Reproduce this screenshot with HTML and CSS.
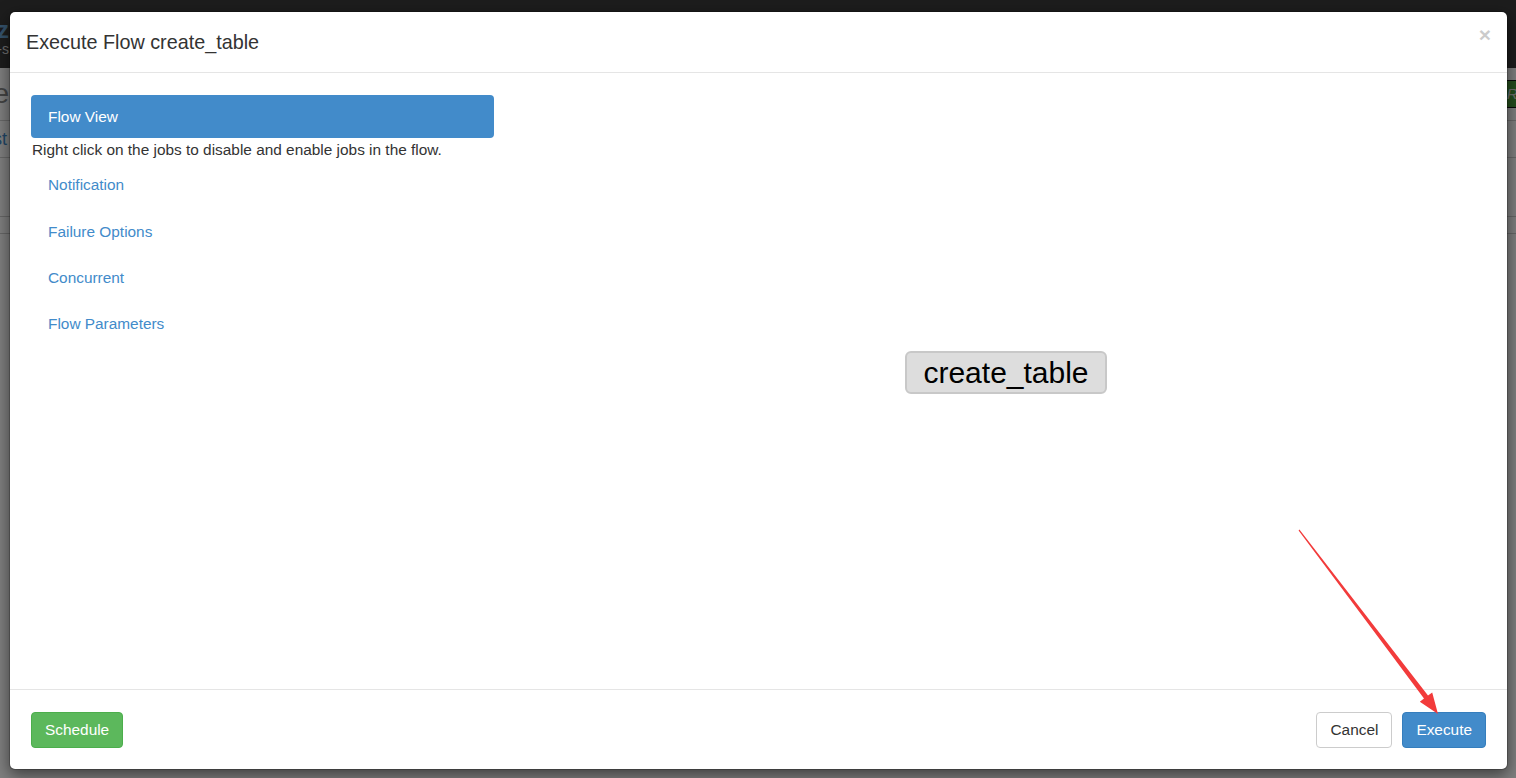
FILE: index.html
```html
<!DOCTYPE html>
<html>
<head>
<meta charset="utf-8">
<link rel="stylesheet" href="styles.css">
</head>
<body>
<div class="page">
  <div class="navbar">
    <div class="clip-left brand"><span class="brand-main">Az</span><span class="brand-sub">Open-s</span></div>
  </div>
  <div class="page-header">
    <h1 class="clip-left page-title">Structure</h1>
    <span class="page-btn">Run</span>
  </div>
  <div class="page-tabs"><span class="clip-left page-tab">List</span></div>
  <div class="page-row"></div>
  <div class="page-row short"></div>
</div>
<div class="backdrop"></div>

<div class="modal">
  <div class="modal-header">
    <h4 class="modal-title">Execute Flow create_table</h4>
    <button class="close" type="button">&times;</button>
  </div>
  <div class="modal-body">
    <div class="sidebar">
      <ul class="nav">
        <li class="active"><a>Flow View</a></li>
        <li class="hint">Right click on the jobs to disable and enable jobs in the flow.</li>
        <li><a>Notification</a></li>
        <li><a>Failure Options</a></li>
        <li><a>Concurrent</a></li>
        <li><a>Flow Parameters</a></li>
      </ul>
    </div>
    <div class="graph">
      <div class="node">create_table</div>
    </div>
  </div>
  <div class="modal-footer">
    <button class="btn btn-success" type="button">Schedule</button>
    <div class="footer-right">
      <button class="btn btn-default" type="button">Cancel</button>
      <button class="btn btn-primary" type="button">Execute</button>
    </div>
  </div>
</div>

<svg class="annotation" width="1516" height="778" viewBox="0 0 1516 778">
  <polygon fill="#f23b3b" points="1299.4,529.6 1298.6,530.4 1424,698.6 1419.8,701.8 1438,714 1432.2,692.6 1428,695.6"/>
</svg>
</body>
</html>
```

FILE: styles.css
```css
html, body {
  margin: 0;
  padding: 0;
  width: 1516px;
  height: 778px;
  overflow: hidden;
  font-family: "Liberation Sans", Arial, Helvetica, sans-serif;
  font-size: 15.4px;
  color: #333;
}

.page {
  width: 1516px;
  height: 778px;
  background: #ffffff;
  display: flex;
  flex-direction: column;
}

.clip-left {
  width: 9px;
  direction: rtl;
  white-space: nowrap;
}

.navbar {
  height: 68px;
  background: #3a3a3a;
  display: flex;
  align-items: center;
}

.brand {
  display: flex;
  flex-direction: column;
  align-items: flex-start;
  line-height: 1;
  margin-top: 6px;
}

.brand-main {
  font-size: 24px;
  font-weight: bold;
  color: #6aa6d8;
}

.brand-sub {
  font-size: 14px;
  color: #dddddd;
}

.page-header {
  height: 52px;
  display: flex;
  align-items: center;
  justify-content: space-between;
  border-bottom: 1px solid #d0d0d0;
}

.page-title {
  margin: 0;
  font-size: 28px;
  font-weight: normal;
  color: #888;
}

.page-btn {
  background: #4a9a3a;
  border: 1px solid #111;
  color: #ddd;
  font-style: italic;
  padding: 4px 20px;
  margin-right: -40px;
}

.page-tabs {
  height: 36px;
  border-bottom: 1px solid #d0d0d0;
  display: flex;
  align-items: center;
}

.page-tab {
  color: #428bca;
  font-size: 18px;
  width: 7px;
}

.page-row {
  height: 58px;
  border-bottom: 1px solid #cfcfcf;
}

.page-row.short {
  height: 16px;
}

.backdrop {
  position: absolute;
  left: 0;
  top: 0;
  width: 1516px;
  height: 778px;
  background: rgba(0, 0, 0, 0.5);
}

.modal {
  position: absolute;
  left: 9px;
  top: 11px;
  width: 1499px;
  height: 759px;
  box-sizing: border-box;
  background: #fff;
  border: 1px solid rgba(0, 0, 0, 0.2);
  border-radius: 6px;
  box-shadow: 0 5px 15px rgba(0, 0, 0, 0.5);
  display: flex;
  flex-direction: column;
  background-clip: padding-box;
}

.modal-header {
  height: 61px;
  box-sizing: border-box;
  padding: 15px 15px 15px 16px;
  border-bottom: 1px solid #e5e5e5;
  display: flex;
  align-items: center;
  justify-content: space-between;
}

.modal-title {
  margin: 0;
  font-size: 19.8px;
  font-weight: normal;
  line-height: 30px;
  color: #333;
}

.close {
  background: none;
  border: 0;
  padding: 0;
  margin: -16px 1px 0 0;
  font-family: "Liberation Sans", Arial, sans-serif;
  font-size: 21px;
  font-weight: bold;
  line-height: 1;
  color: #000;
  opacity: 0.2;
}

.modal-body {
  flex: 1;
  padding: 22px 21px 20px 21px;
  display: flex;
}

.sidebar {
  width: 463px;
  flex: none;
}

.nav {
  list-style: none;
  margin: 0;
  padding: 0;
}

.nav li {
  margin-top: 3.33px;
}

.nav li:first-child {
  margin-top: 0;
}

.nav a {
  display: block;
  padding: 0 17px;
  height: 43px;
  line-height: 44px;
  border-radius: 4px;
  color: #428bca;
  cursor: pointer;
}

.nav li.active a {
  background: #428bca;
  color: #fff;
}

.nav li.hint {
  margin-top: 1px;
  padding-left: 1px;
  line-height: 22px;
  height: 21px;
  color: #333;
}

.graph {
  flex: 1;
  position: relative;
}

.node {
  position: absolute;
  left: 411px;
  top: 256px;
  width: 202px;
  height: 43px;
  box-sizing: border-box;
  background: #dddddd;
  border: 2px solid #c8c8c8;
  border-radius: 6px;
  font-size: 30px;
  line-height: 39px;
  text-align: center;
  color: #000;
}

.modal-footer {
  height: 80px;
  box-sizing: border-box;
  padding: 0 21px 0 21px;
  border-top: 1px solid #e5e5e5;
  display: flex;
  align-items: center;
  justify-content: space-between;
}

.footer-right {
  display: flex;
  gap: 10px;
}

.btn {
  height: 36px;
  box-sizing: border-box;
  padding: 0 13px;
  font-family: "Liberation Sans", Arial, sans-serif;
  font-size: 15.4px;
  border-radius: 4px;
  border: 1px solid transparent;
  cursor: pointer;
}

.btn-success {
  background: #5cb85c;
  border-color: #4cae4c;
  color: #fff;
}

.btn-default {
  background: #fff;
  border-color: #ccc;
  color: #333;
}

.btn-primary {
  background: #428bca;
  border-color: #357ebd;
  color: #fff;
}

.annotation {
  position: absolute;
  left: 0;
  top: 0;
  pointer-events: none;
}
```
